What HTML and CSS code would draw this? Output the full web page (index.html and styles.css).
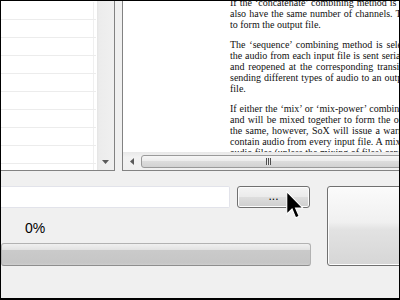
FILE: index.html
```html
<!DOCTYPE html>
<html>
<head>
<meta charset="utf-8">
<link rel="stylesheet" href="styles.css">
</head>
<body>
<div class="window">
  <div class="top">
    <div class="listpanel">
      <div class="list">
        <div class="row"><div class="cell"></div></div>
        <div class="row"><div class="cell"></div></div>
        <div class="row"><div class="cell"></div></div>
        <div class="row"><div class="cell"></div></div>
        <div class="row"><div class="cell"></div></div>
        <div class="row"><div class="cell"></div></div>
        <div class="row"><div class="cell"></div></div>
        <div class="row"><div class="cell"></div></div>
        <div class="row"><div class="cell"></div></div>
        <div class="row"><div class="cell"></div></div>
      </div>
      <div class="vscroll">
        <div class="vtrack"></div>
        <div class="vbtn"><svg width="7" height="4" viewBox="0 0 7 4"><polygon points="0,0 7,0 3.5,4" fill="#5a5a5a"/></svg></div>
      </div>
    </div>
    <div class="docpanel">
      <div class="doc">
        <div class="page">
          <p>
            <span class="line">If the ‘concatenate’ combining method is selected (usually, this will be by default) then the input files must</span>
            <span class="line">also have the same number of channels. The audio from each input file is concatenated, in the order given,</span>
            <span class="line end">to form the output file.</span>
          </p>
          <p>
            <span class="line">The ‘sequence’ combining method is selected automatically for play. It is similar to ‘concatenate’ in that</span>
            <span class="line">the audio from each input file is sent serially to the output file. However, here the output file may be closed</span>
            <span class="line">and reopened at the corresponding transition between input files. This may be just what is needed when</span>
            <span class="line">sending different types of audio to an output device, but is not generally useful when the output is a normal</span>
            <span class="line end">file.</span>
          </p>
          <p>
            <span class="line">If either the ‘mix’ or ‘mix-power’ combining method is selected then two or more input files must be given</span>
            <span class="line">and will be mixed together to form the output file. The number of channels in each input file need not be</span>
            <span class="line">the same, however, SoX will issue a warning if they are not and some channels in the output file will not</span>
            <span class="line">contain audio from every input file. A mixed audio file cannot be un-mixed without reference to the original</span>
            <span class="line end">audio files (unless the mixing of files) cannot be undone.</span>
          </p>
        </div>
      </div>
      <div class="hscroll">
        <div class="hbtn"><svg width="4" height="7" viewBox="0 0 4 7"><polygon points="4,0 4,7 0,3.5" fill="#5a5a5a"/></svg></div>
        <div class="hthumb"><span class="grip"></span></div>
      </div>
    </div>
  </div>
  <div class="bottom">
    <div class="controls">
      <div class="filerow">
        <div class="input"></div>
        <div class="btn">...</div>
      </div>
      <div class="pct">0%</div>
      <div class="progress"></div>
    </div>
    <div class="bigbtn"></div>
  </div>
  <svg class="cursor" width="18" height="28" viewBox="0 0 12.8 20">
    <path d="M0.5 0.5 L0.5 16.6 L4.3 12.9 L6.9 19.2 L9.4 18.1 L6.8 12.1 L11.9 12.1 Z" fill="#000" stroke="#fff" stroke-width="0.8" stroke-linejoin="miter"/>
  </svg>
</div>
</body>
</html>
```
FILE: styles.css
```css
* { box-sizing: border-box; }
html, body { margin: 0; padding: 0; background: #f0f0f0; }

.window {
  position: relative;
  width: 400px;
  height: 300px;
  border: 1px solid #000;
  border-bottom-width: 2px;
  background: #f0f0f0;
  overflow: hidden;
  font-family: "Liberation Sans", Arial, sans-serif;
}

.top {
  display: flex;
  height: 170px;
  gap: 7px;
}

.listpanel {
  display: flex;
  width: 114px;
  flex-shrink: 0;
  border-right: 1px solid #828282;
  border-bottom: 1px solid #828282;
}

.list {
  width: 96px;
  background: #fff;
  padding-top: 1px;
  overflow: hidden;
}

.row {
  height: 18px;
  border-bottom: 1px solid #ececec;
  width: 95px;
}

.cell {
  width: 93px;
  height: 100%;
  border-right: 1px solid #efefef;
}

.vscroll {
  width: 17px;
  display: flex;
  flex-direction: column;
  background: linear-gradient(to right, #e4e4e4 0, #ececec 2px, #f0f0f0 100%);
}

.vtrack { flex: 1; }

.vbtn {
  height: 17px;
  display: flex;
  align-items: center;
  justify-content: center;
}

.docpanel {
  flex: 1;
  display: flex;
  flex-direction: column;
  border-left: 1px solid #828282;
  border-bottom: 1px solid #828282;
  overflow: hidden;
}

.doc {
  flex: 1;
  background: #fff;
  overflow: hidden;
}

.page {
  padding-left: 107px;
  margin-top: -4px;
  font-family: "Liberation Serif", "Times New Roman", serif;
  font-size: 10px;
  line-height: 11px;
  color: #111;
}

.page p { margin: 0 0 9px; }

.line {
  display: block;
  width: 436px;
  white-space: nowrap;
  text-align: justify;
  text-align-last: justify;
}

.line.end { text-align-last: left; }

.hscroll {
  height: 18px;
  flex-shrink: 0;
  display: flex;
  background: linear-gradient(#e8e8e8, #f2f2f2 30%, #f0f0f0);
}

.hbtn {
  width: 17px;
  display: flex;
  align-items: center;
  justify-content: center;
  padding-top: 1px;
}

.hthumb {
  flex: 1;
  margin: 3px -6px 2px 1px;
  border: 1px solid #9a9a9a;
  border-radius: 3px;
  background: linear-gradient(#f6f6f6 0, #ececec 45%, #dcdcdc 50%, #d2d2d2 100%);
  display: flex;
  align-items: center;
  padding-left: 124px;
}

.grip {
  width: 5px;
  height: 7px;
  background: repeating-linear-gradient(to right, #4e4e4e 0 1px, #e8e8e8 1px 2px);
}

.bottom {
  display: flex;
  align-items: flex-start;
  padding-top: 15px;
}

.controls {
  width: 310px;
  flex-shrink: 0;
  display: flex;
  flex-direction: column;
}

.filerow {
  display: flex;
  height: 22px;
  gap: 7px;
}

.input {
  width: 229px;
  background: #fff;
  border: 1px solid #e2e3ea;
  border-left: none;
  border-radius: 0 2px 2px 0;
}

.btn {
  width: 73px;
  border: 1px solid #707070;
  border-radius: 3px;
  background: linear-gradient(#f4f4f4 0, #ebebeb 48%, #dddddd 52%, #cfcfcf 100%);
  box-shadow: inset 0 0 0 1px #fcfcfc;
  font-size: 12px;
  line-height: 18px;
  text-align: center;
  color: #000;
}

.pct {
  height: 35px;
  padding: 13px 0 0 24px;
  font-size: 14px;
  line-height: 15px;
  color: #000;
}

.progress {
  height: 23px;
  border: 1px solid #b2b2b2;
  border-bottom-color: #8e8e8e;
  border-radius: 3px;
  background: linear-gradient(#f0f0f0 0, #e2e2e2 28%, #cacaca 30%, #c6c6c6 90%, #cfcfcf 100%);
}

.bigbtn {
  flex-shrink: 0;
  margin-left: 16px;
  width: 90px;
  height: 80px;
  border: 1px solid #707070;
  border-radius: 3px;
  background: linear-gradient(#fbfbfb 0, #f0f0f0 45%, #e2e2e2 55%, #d6d6d6 100%);
  box-shadow: inset 0 0 0 1px #fdfdfd;
}

.cursor {
  position: absolute;
  left: 285px;
  top: 190px;
}
```
